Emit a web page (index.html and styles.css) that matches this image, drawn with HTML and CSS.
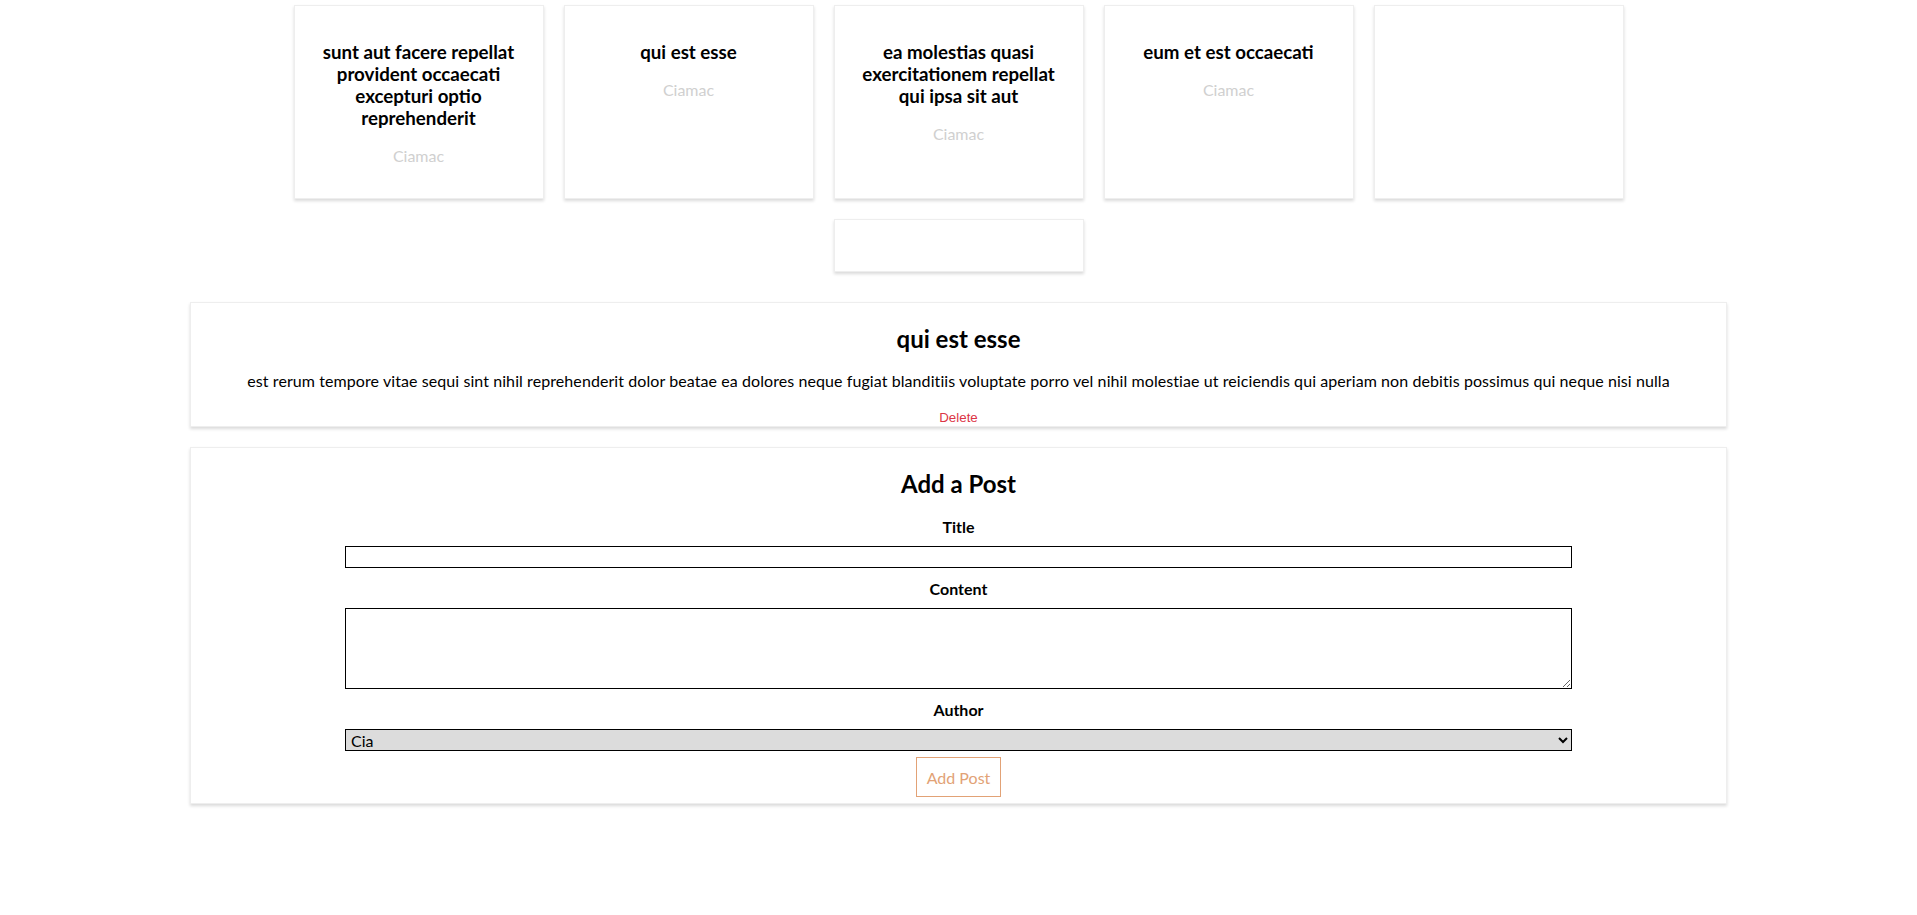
FILE: index.html
```html
<!DOCTYPE html>
<html lang="en">
<head>
<meta charset="utf-8">
<title>Posts</title>
<link rel="stylesheet" href="styles.css">
</head>
<body>
<div class="cards">
  <div class="card">
    <h3 class="card-title">sunt aut facere repellat provident occaecati excepturi optio reprehenderit</h3>
    <p class="card-author">Ciamac</p>
  </div>
  <div class="card">
    <h3 class="card-title">qui est esse</h3>
    <p class="card-author">Ciamac</p>
  </div>
  <div class="card">
    <h3 class="card-title">ea molestias quasi exercitationem repellat qui ipsa sit aut</h3>
    <p class="card-author">Ciamac</p>
  </div>
  <div class="card">
    <h3 class="card-title">eum et est occaecati</h3>
    <p class="card-author">Ciamac</p>
  </div>
  <div class="card">
    <h3 class="card-title"></h3>
    <p class="card-author"></p>
  </div>
  <div class="card">
    <h3 class="card-title"></h3>
    <p class="card-author"></p>
  </div>
</div>

<section class="panel detail">
  <h2 class="panel-title">qui est esse</h2>
  <p class="detail-body">est rerum tempore vitae sequi sint nihil reprehenderit dolor beatae ea dolores neque fugiat blanditiis voluptate porro vel nihil molestiae ut reiciendis qui aperiam non debitis possimus qui neque nisi nulla</p>
  <button class="delete" type="button">Delete</button>
</section>

<section class="panel add-post">
  <h2 class="panel-title">Add a Post</h2>
  <form class="post-form">
    <label class="field-label" for="title">Title</label>
    <input class="field-input" id="title" type="text">
    <label class="field-label" for="content">Content</label>
    <textarea class="field-textarea" id="content"></textarea>
    <label class="field-label" for="author">Author</label>
    <select class="field-select" id="author">
      <option>Cia</option>
    </select>
    <button class="submit" type="submit">Add Post</button>
  </form>
</section>
</body>
</html>
```

FILE: styles.css
```css
* {
  box-sizing: border-box;
}

body {
  margin: 0;
  background: #fff;
  color: #000;
  font-family: "Lato", "Noto Sans", sans-serif;
  font-size: 16px;
}

.cards {
  display: flex;
  flex-wrap: wrap;
  justify-content: center;
  gap: 20px;
  width: 1350px;
  margin: 0 auto 30px;
  padding: 5px 10px 0;
}

.card {
  width: 250px;
  padding: 16px;
  background: #fff;
  border: 1px solid #eee;
  box-shadow: 0 2px 3px rgba(0, 0, 0, 0.15);
  text-align: center;
}

.card-title {
  margin: 19px 0 17px;
  font-size: 18.72px;
  line-height: 22px;
  font-weight: 700;
}

.card-author {
  margin: 0 0 16px;
  line-height: 20px;
  color: #d0d0d0;
}

.card-title:empty {
  margin: 0;
}

.card-author:empty {
  margin: 0;
  min-height: 19px;
}

.panel {
  width: calc(80% + 2px);
  margin: 0 auto 20px;
  background: #fff;
  border: 1px solid #eee;
  box-shadow: 0 2px 3px rgba(0, 0, 0, 0.15);
  text-align: center;
  box-sizing: content-box;
}

.panel-title {
  margin: 22px 0 0;
  font-size: 24px;
  line-height: 28px;
  font-weight: 700;
}

.detail-body {
  margin: 17px 0 16px;
  line-height: 22px;
  letter-spacing: 0.08px;
}

.delete {
  display: block;
  margin: 0 auto;
  padding: 2px 6px 0;
  height: 18px;
  border: none;
  background: none;
  color: #dc3545;
  font-family: "Liberation Sans", Arial, sans-serif;
  font-size: 13.33px;
  line-height: 16px;
  cursor: pointer;
}

.post-form {
  display: flex;
  flex-direction: column;
  align-items: center;
  padding: 8px 0 6px;
}

.field-label {
  margin: 11px 0 9px;
  line-height: 20px;
  font-weight: 700;
}

.field-input,
.field-textarea,
.field-select {
  width: 1227px;
  max-width: 80%;
  border: 1px solid #000;
  border-radius: 0;
  font-family: "Lato", sans-serif;
  font-size: 16px;
  color: #000;
}

.field-input {
  height: 22px;
  padding: 0 2px;
  background: #fff;
}

.field-textarea {
  height: 81px;
  padding: 2px;
  background: #fff;
}

.field-select {
  height: 22px;
  padding: 0 1px;
  background-color: #dcdcdc;
}

.submit {
  margin-top: 6px;
  width: 85px;
  height: 40px;
  padding: 0 8px;
  background: #fff;
  border: 1px solid #e2a276;
  border-radius: 0;
  color: #e2a276;
  font-family: "Lato", sans-serif;
  font-size: 16px;
  cursor: pointer;
}
```
